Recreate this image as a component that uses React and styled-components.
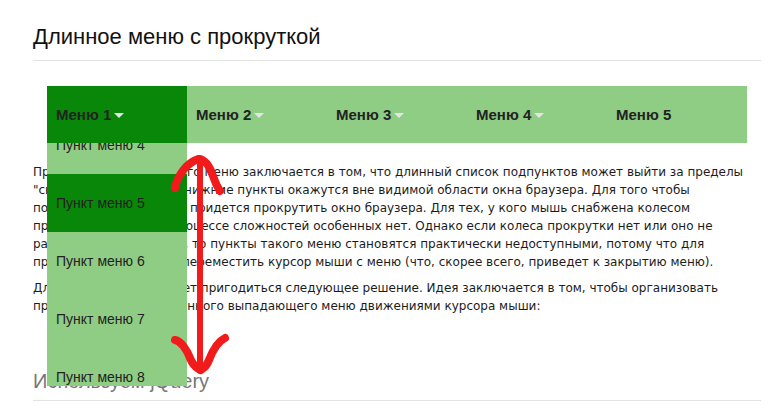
import React from "react";
import styled, { createGlobalStyle } from "styled-components";

const Global = createGlobalStyle`
  html, body { margin: 0; padding: 0; background: #fff; }
  body { font-family: "Liberation Sans", Arial, sans-serif; }
`;

const Page = styled.div`
  position: relative;
  width: 779px;
  height: 414px;
  overflow: hidden;
  box-sizing: border-box;
  padding: 0 18px 0 33px;
`;

const Title = styled.h1`
  margin: 0;
  padding: 22px 0 8px;
  font: 400 22px/30px "Liberation Sans", Arial, sans-serif;
  color: #111;
  border-bottom: 1px solid #e3e3e3;
`;

const SubTitle = styled(Title).attrs({ as: "h2" })`
  margin-top: 51px;
  padding: 0 0 4px;
  font-size: 20px;
  color: #777;
`;

const MenuBar = styled.nav`
  position: relative;
  z-index: 2;
  display: flex;
  width: 700px;
  height: 57px;
  margin: 25px 0 0 14px;
  background: #8fcc84;
`;

const MenuItem = styled.div`
  position: relative;
  display: flex;
  align-items: center;
  width: 140px;
  box-sizing: border-box;
  padding-left: 9px;
  font: 700 15px "Liberation Sans", Arial, sans-serif;
  color: #222;
  background: ${(p) => (p.$active ? "#088708" : "transparent")};
`;

const Caret = styled.span`
  display: inline-block;
  width: 0;
  height: 0;
  margin-left: 3px;
  margin-top: 1px;
  border-left: 5px solid transparent;
  border-right: 5px solid transparent;
  border-top: 5px solid #e4e4e4;
`;

const Dropdown = styled.div`
  position: absolute;
  top: 100%;
  left: 0;
  width: 140px;
  height: 243px;
  overflow: hidden;
  background: #8fcc84;
`;

const DropList = styled.div`
  display: flex;
  flex-direction: column;
`;

const DropItem = styled.div`
  display: flex;
  align-items: center;
  height: 58px;
  flex: none;
  padding-left: 9px;
  font: 400 14px "Liberation Sans", Arial, sans-serif;
  color: #222;
  background: ${(p) => (p.$active ? "#088708" : "transparent")};
`;

const Para = styled.p`
  margin: ${(p) => p.$top}px 0 0;
  font: 400 12px/18px "DejaVu Sans", Verdana, sans-serif;
  color: #1c1c1c;
  white-space: nowrap;
`;

const Arrow = styled.svg`
  position: absolute;
  left: 165px;
  top: 150px;
  z-index: 3;
  overflow: visible;
`;

const menus = [
  { label: "Меню 1", caret: true },
  { label: "Меню 2", caret: true },
  { label: "Меню 3", caret: true },
  { label: "Меню 4", caret: true },
  { label: "Меню 5", caret: false },
];

const subItems = [1, 2, 3, 4, 5, 6, 7, 8];

const p1 = [
  "Проблема очень длинного меню заключается в том, что длинный список подпунктов может выйти за пределы",
  "\"свисать\" вниз, то есть нижние пункты окажутся вне видимой области окна браузера. Для того чтобы",
  "посмотреть все пункты, придется прокрутить окно браузера. Для тех, у кого мышь снабжена колесом",
  "прокрутки, то в этом процессе сложностей особенных нет. Однако если колеса прокрутки нет или оно не",
  "работает как положено, то пункты такого меню становятся практически недоступными, потому что для",
  "прокрутки окна нужно переместить курсор мыши с меню (что, скорее всего, приведет к закрытию меню).",
];

const p2 = [
  "Для таких случаев может пригодиться следующее решение. Идея заключается в том, чтобы организовать",
  "прокрутку слишком длинного выпадающего меню движениями курсора мыши:",
];

const Lines = ({ lines }) =>
  lines.map((l, i) => (
    <React.Fragment key={i}>
      {l}
      {i < lines.length - 1 && <br />}
    </React.Fragment>
  ));

export default function App() {
  const scroll = 201;
  return (
    <>
      <Global />
      <Page>
        <Title>Длинное меню с прокруткой</Title>
        <MenuBar>
          {menus.map((m, i) => (
            <MenuItem key={m.label} $active={i === 0}>
              {m.label}
              {m.caret && <Caret />}
              {i === 0 && (
                <Dropdown>
                  <DropList style={{ transform: `translateY(-${scroll}px)` }}>
                    {subItems.map((n) => (
                      <DropItem key={n} $active={n === 5}>
                        Пункт меню {n}
                      </DropItem>
                    ))}
                  </DropList>
                </Dropdown>
              )}
            </MenuItem>
          ))}
        </MenuBar>
        <Para $top={20}>
          <Lines lines={p1} />
        </Para>
        <Para $top={8}>
          <Lines lines={p2} />
        </Para>
        <SubTitle>Используем jQuery</SubTitle>
        <Arrow width="70" height="230" viewBox="0 0 70 230">
          <g fill="none" stroke="#f21b1b" strokeLinecap="round" strokeLinejoin="round">
            <path d="M35 10 L35 219" strokeWidth="6" />
            <path d="M10 38 C12 26 22 12 34 9" strokeWidth="8" />
            <path d="M34 9 C42 10 46 20 48 26 S53 38 55 41" strokeWidth="8" />
            <path d="M10 190 C16 191 22 200 25 208 S32 218 35 220" strokeWidth="8" />
            <path d="M60 188 C52 192 47 202 44 210 S38 218 36 220" strokeWidth="8" />
          </g>
        </Arrow>
      </Page>
    </>
  );
}
